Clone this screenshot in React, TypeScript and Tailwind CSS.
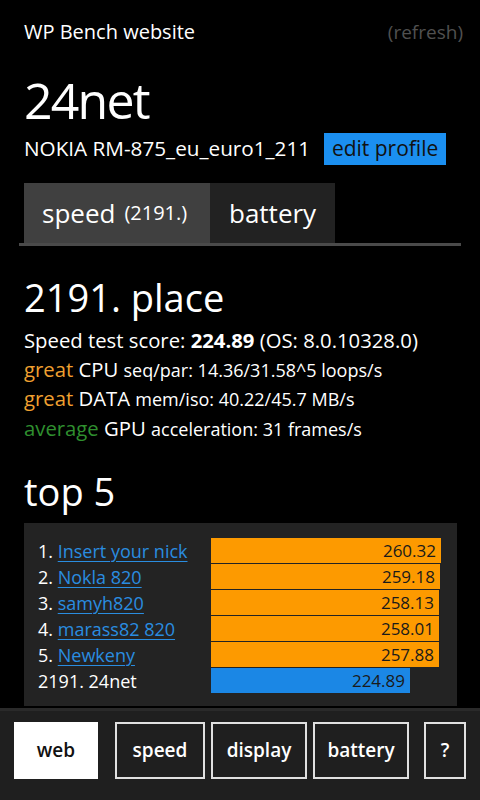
const font = { fontFamily: '"Open Sans", "Noto Sans", sans-serif' };

const top5 = [
  { rank: '1.', name: 'Insert your nick', score: 260.32 },
  { rank: '2.', name: 'Nokla 820', score: 259.18 },
  { rank: '3.', name: 'samyh820', score: 258.13 },
  { rank: '4.', name: 'marass82 820', score: 258.01 },
  { rank: '5.', name: 'Newkeny', score: 257.88 },
];

const MAX = 260.32;
const BAR_W = 230;

function Bar({ score, mine }: { score: number; mine?: boolean }) {
  return (
    <div
      className={`flex h-[25px] items-center justify-end pr-[5px] text-[17px] leading-none text-[#1a1a1a] ${
        mine ? 'bg-[#1b87e5]' : 'bg-[#fd9a00]'
      }`}
      style={{ width: Math.round((score / MAX) * BAR_W) }}
    >
      {score.toFixed(2)}
    </div>
  );
}

function AppButton({ label, active, className = '' }: { label: string; active?: boolean; className?: string }) {
  return (
    <div
      className={`flex h-[57px] items-center justify-center ${
        active ? 'bg-white text-[#111]' : 'border-2 border-[#e0e0e0]'
      } ${className}`}
    >
      {label}
    </div>
  );
}

export default function App() {
  return (
    <div className="flex h-[800px] w-[480px] flex-col overflow-hidden bg-black text-white" style={font}>
      <div className="px-6">
        <div className="flex items-center justify-between pt-[18px] text-[20px] leading-[28px]">
          <span>WP Bench website</span>
          <span className="-mr-[7px] text-[19px] text-[#505050]">(refresh)</span>
        </div>

        <h1 className="mt-[26px] text-[50px] leading-[56px] tracking-[-1.8px]">24net</h1>
        <div className="mt-[5px] flex items-center text-[20.7px]">
          <span>NOKIA RM-875_eu_euro1_211</span>
          <span className="ml-[14px] flex h-[32px] w-[122px] items-center justify-center bg-[#1b8ff0] text-[21px] text-[#111]">
            edit profile
          </span>
        </div>

        <div className="-mx-[5px] mt-[18px] border-b-[3px] border-[#4a4a4a]">
          <div className="flex px-[5px]">
            <div className="flex h-[60px] w-[186px] items-center bg-[#404040] pl-[18px]">
              <span className="text-[26px]">speed</span>
              <span className="ml-[9px] text-[20px]">(2191.)</span>
            </div>
            <div className="flex h-[60px] w-[125px] items-center bg-[#222] pl-[19px] text-[26px]">battery</div>
          </div>
        </div>

        <h2 className="mt-[29px] text-[38px] leading-[44px]">2191. place</h2>
        <div className="mt-[7px] text-[20.3px] leading-[28.5px]">
          <div>
            Speed test score: <b>224.89</b> (OS: 8.0.10328.0)
          </div>
          <div>
            <span className="text-[#f0a030]">great</span> CPU{' '}
            <span className="text-[18px]">seq/par: 14.36/31.58^5 loops/s</span>
          </div>
          <div>
            <span className="text-[#f0a030]">great</span> DATA{' '}
            <span className="text-[18px]">mem/iso: 40.22/45.7 MB/s</span>
          </div>
          <div>
            <span className="text-[#2f8f2f]">average</span> GPU{' '}
            <span className="text-[18px]">acceleration: 31 frames/s</span>
          </div>
        </div>

        <h2 className="mt-[26px] text-[38px] leading-[44px]">top 5</h2>

        <div className="mt-[10px] flex h-[183px] w-[433px] bg-[#232323] pl-[14px] pt-[15px]">
          <div className="flex w-[173px] flex-col gap-[1px] text-[18px]">
            {top5.map((r) => (
              <div key={r.rank} className="flex h-[25px] items-center whitespace-nowrap pt-[2px]">
                {r.rank}&nbsp;
                <span className="text-[#2a8de0] underline decoration-1 underline-offset-[3px]">{r.name}</span>
              </div>
            ))}
            <div className="flex h-[25px] items-center pt-[2px]">2191. 24net</div>
          </div>
          <div className="flex flex-col gap-[1px]">
            {top5.map((r) => (
              <Bar key={r.rank} score={r.score} />
            ))}
            <Bar score={224.89} mine />
          </div>
        </div>
      </div>

      <div className="mt-auto flex h-[92px] gap-[6px] border-t-[3px] border-[#2a2a2a] bg-[#1f1f1f] pl-[14px] pt-[11px] text-[19px] font-semibold">
        <AppButton label="web" active className="w-[84px]" />
        <AppButton label="speed" className="ml-[11px] w-[90px]" />
        <AppButton label="display" className="w-[96px]" />
        <AppButton label="battery" className="w-[96px]" />
        <AppButton label="?" className="ml-[9px] w-[42px]" />
      </div>
    </div>
  );
}
